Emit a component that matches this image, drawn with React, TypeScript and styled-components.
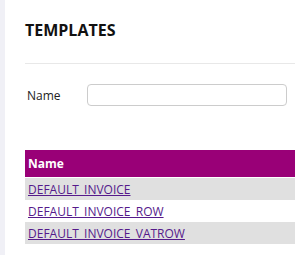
import styled, { createGlobalStyle } from 'styled-components'

const GlobalStyle = createGlobalStyle`
  html, body {
    margin: 0;
    padding: 0;
    background: #fff;
    overflow: hidden;
  }
  body {
    font-family: "Open Sans", "Noto Sans", sans-serif;
    color: #111;
  }
`

const Page = styled.div`
  display: flex;
  width: 295px;
  height: 255px;
  overflow: hidden;
`

const Sidebar = styled.div`
  width: 5px;
  flex: none;
  background: #f0f0f6;
`

const Main = styled.div`
  flex: none;
  width: 310px;
  padding-left: 20px;
`

const Title = styled.h2`
  margin: 0;
  padding: 19px 0 22px;
  font-size: 16px;
  line-height: 22px;
  font-weight: 700;
  color: #111;
  border-bottom: 1px solid #e8e8e8;
`

const FilterRow = styled.div`
  display: flex;
  align-items: center;
  margin-top: 20px;
  padding-left: 2px;
`

const Label = styled.label`
  width: 60px;
  font-size: 12px;
  color: #222;
`

const Input = styled.input`
  box-sizing: border-box;
  width: 200px;
  height: 22px;
  border: 1px solid #ccc;
  border-radius: 4px;
  outline: none;
`

const Table = styled.table`
  margin-top: 44px;
  width: 100%;
  border-collapse: collapse;
  font-size: 12px;
`

const HeadCell = styled.th`
  background: #990077;
  color: #fff;
  text-align: left;
  font-weight: 700;
  height: 27px;
  padding: 0 3px;
  border-bottom: 1px solid #fff;
`

const Row = styled.tr<{ $striped: boolean }>`
  background: ${(p) => (p.$striped ? '#e0e0e0' : '#fff')};
`

const Cell = styled.td`
  height: 22px;
  padding: 0 3px;
`

const Link = styled.a`
  color: #551a8b;
  text-decoration: underline;
`

const templates = ['DEFAULT_INVOICE', 'DEFAULT_INVOICE_ROW', 'DEFAULT_INVOICE_VATROW']

export default function App() {
  return (
    <>
      <GlobalStyle />
      <Page>
        <Sidebar />
        <Main>
          <Title>TEMPLATES</Title>
          <FilterRow>
            <Label>Name</Label>
            <Input type="text" />
          </FilterRow>
          <Table>
            <thead>
              <tr>
                <HeadCell>Name</HeadCell>
              </tr>
            </thead>
            <tbody>
              {templates.map((t, i) => (
                <Row key={t} $striped={i % 2 === 0}>
                  <Cell>
                    <Link href="#">{t}</Link>
                  </Cell>
                </Row>
              ))}
            </tbody>
          </Table>
        </Main>
      </Page>
    </>
  )
}
